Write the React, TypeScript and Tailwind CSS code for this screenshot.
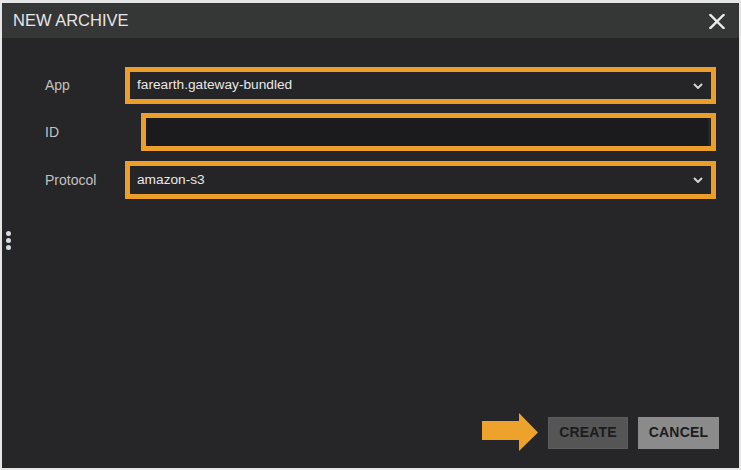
export default function App() {
  const font = { fontFamily: '"Liberation Sans", Arial, sans-serif' };

  return (
    <div
      className="w-[741px] h-[470px] bg-[#e6e6e6] pt-[3px] px-[2px] pb-[2px]"
      style={font}
    >
      <div className="flex flex-col h-full">
        {/* Header */}
        <div className="h-[35px] flex items-center justify-between bg-[#353636] pl-[11px] pr-[14px]">
          <span className="text-[16.5px] text-[#e6e6e6] leading-none">NEW ARCHIVE</span>
          <svg width="16" height="15" viewBox="0 0 16 15" className="mt-[1px]">
            <path d="M1.5 1 L14.5 14 M14.5 1 L1.5 14" stroke="#ececec" strokeWidth="2.4" strokeLinecap="square" />
          </svg>
        </div>

        {/* Body */}
        <div className="relative flex-1 flex flex-col bg-[#262628] pt-[29px] pb-[16px] pl-[43px] pr-[23px]">
          <div className="flex flex-col">
            <Row label="App">
              <SelectBox value="farearth.gateway-bundled" />
            </Row>
            <div className="h-[9px]" />
            <Row label="ID">
              <div className="ml-[16px] flex-1 h-[38px] border-[5px] border-[#eb9f2a] bg-[#262628]">
                <div className="h-full mr-[3px] bg-[#1b1b1d]" />
              </div>
            </Row>
            <div className="h-[10px]" />
            <Row label="Protocol">
              <SelectBox value="amazon-s3" tall />
            </Row>
          </div>

          <div className="flex-1" />

          {/* Footer buttons */}
          <div className="flex items-center justify-end gap-[10px] -mr-[3px]">
            <svg width="57" height="39" viewBox="0 0 57 39" className="mr-[-1px]">
              <polygon points="0,8 37,8 37,0 56,19.5 37,38 37,27 0,27" fill="#eca22b" />
            </svg>
            <button className="w-[80px] h-[32px] bg-[#555555] border border-[#5c5c5c] text-[14px] font-bold text-[#1a1c20] tracking-[0.2px]">
              CREATE
            </button>
            <button className="w-[81px] h-[32px] bg-[#8b8b8b] text-[14px] font-bold text-[#1a1c20] tracking-[0.2px]">
              CANCEL
            </button>
          </div>

          {/* resize handle */}
          <div className="absolute left-[4px] top-[193px] flex flex-col gap-[2px]">
            <span className="w-[5px] h-[5px] rounded-full bg-[#d6dbe2]" />
            <span className="w-[5px] h-[5px] rounded-full bg-[#d6dbe2]" />
            <span className="w-[5px] h-[5px] rounded-full bg-[#d6dbe2]" />
          </div>
        </div>
      </div>
    </div>
  );
}

function Row({ label, children }: { label: string; children: React.ReactNode }) {
  return (
    <div className="flex items-center">
      <span className="w-[80px] shrink-0 text-[14px] text-[#c2c2c2]">{label}</span>
      {children}
    </div>
  );
}

function SelectBox({ value, tall }: { value: string; tall?: boolean }) {
  return (
    <div
      className={
        "flex-1 flex items-center justify-between border-[5px] border-[#eb9f2a] bg-[#252527] pl-[7px] pr-[8px] " +
        (tall ? "h-[38px]" : "h-[37px]")
      }
    >
      <span className="text-[13.7px] text-[#e8e8e8]">{value}</span>
      <svg width="10" height="6" viewBox="0 0 10 6">
        <path d="M1 1 L5 5 L9 1" stroke="#d4d4d4" strokeWidth="2" fill="none" />
      </svg>
    </div>
  );
}
